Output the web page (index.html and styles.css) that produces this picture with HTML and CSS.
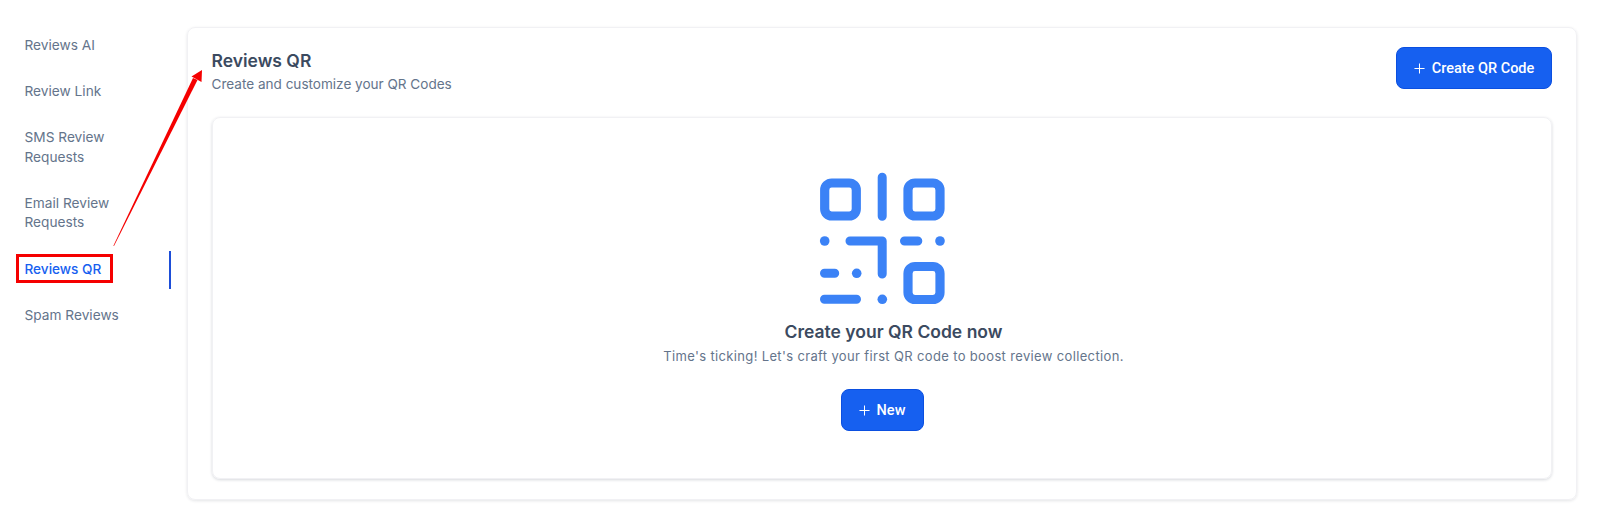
FILE: index.html
```html
<!DOCTYPE html>
<html lang="en">

<head>
    <meta charset="UTF-8">
    <meta name="viewport" content="width=device-width, initial-scale=1.0">
    <title>Reviews QR</title>
    <link rel="stylesheet" href="styles.css">
</head>

<body>
    <nav class="sidebar">
        <a class="nav-item">Reviews AI</a>
        <a class="nav-item">Review Link</a>
        <a class="nav-item">SMS Review Requests</a>
        <a class="nav-item">Email Review Requests</a>
        <a class="nav-item active">Reviews QR</a>
        <a class="nav-item">Spam Reviews</a>
    </nav>

    <main class="panel">
        <header class="panel-head">
            <div class="panel-title">
                <h1>Reviews QR</h1>
                <p>Create and customize your QR Codes</p>
            </div>
            <button class="btn btn-create">
                <svg class="plus" viewBox="0 0 12 12"><path d="M6 .5v11M.5 6h11" /></svg>
                Create QR Code
            </button>
        </header>

        <section class="empty-card">
            <svg class="qr-icon" viewBox="0 0 140 140">
                <rect x="12.7" y="13" width="31.6" height="33" rx="7" />
                <rect x="96" y="13" width="32" height="33" rx="7" />
                <rect x="96" y="96.5" width="32" height="33" rx="7" />
                <path d="M70.2 7.2v39M38 71h32.2v33M92.5 71h13.3M12.5 103.3h10.2M12.5 129.3h32" />
                <circle cx="12.7" cy="71" r="4.8" />
                <circle cx="128" cy="71" r="4.8" />
                <circle cx="44.7" cy="103.3" r="4.8" />
                <circle cx="70.3" cy="129.3" r="4.8" />
            </svg>
            <h2>Create your QR Code now</h2>
            <p>Time's ticking! Let's craft your first QR code to boost review collection.</p>
            <button class="btn btn-new">
                <svg class="plus" viewBox="0 0 12 12"><path d="M6 .5v11M.5 6h11" /></svg>
                New
            </button>
        </section>
    </main>

    <!-- red annotation drawn over the screenshot -->
    <div class="callout-box"></div>
    <svg class="callout-arrow" viewBox="0 0 120 190">
        <polygon points="2,179 1.4,178.7 81,11 85.5,13" />
        <polygon points="90,3 89.5,15 79.5,9.5" />
    </svg>
</body>

</html>
```
FILE: styles.css
```css
* {
    box-sizing: border-box;
}

body {
    margin: 0;
    height: 529px;
    padding: 27px 23px 29px 0;
    display: flex;
    background: #fff;
    color: #334155;
    font-family: Inter, "Noto Sans", sans-serif;
    overflow: hidden;
}

.sidebar {
    width: 171px;
    flex: none;
    display: flex;
    flex-direction: column;
    gap: 8.2px;
}

.nav-item {
    display: block;
    padding: 8.75px 40px 9.75px 24.5px;
    font-size: 13.7px;
    line-height: 19.5px;
    color: #64748b;
}

.nav-item.active {
    color: #1660f0;
    font-size: 13.6px;
    font-weight: 500;
    border-right: 2px solid #1d4ed8;
}

.panel {
    flex: 1;
    margin-left: 16px;
    padding: 19px 24px 20px;
    display: flex;
    flex-direction: column;
    gap: 22px;
    border: 1px solid #f1f1f4;
    border-radius: 8px;
    box-shadow: 0 1px 3px rgba(30, 41, 59, 0.12);
}

.panel-head {
    display: flex;
    justify-content: space-between;
    align-items: flex-start;
}

.panel-title {
    padding-top: 2px;
    margin-left: -0.5px;
}

.panel-head h1 {
    margin: 0;
    font-size: 17.5px;
    line-height: 24px;
    font-weight: 600;
    color: #3b4a60;
}

.panel-head p {
    margin: 0;
    font-size: 13.55px;
    line-height: 22px;
    color: #64748b;
}

.btn {
    display: flex;
    align-items: center;
    justify-content: center;
    gap: 7px;
    height: 42px;
    border: 1px solid #0b4fe0;
    border-radius: 8px;
    background: #1660f0;
    color: #fff;
    font-family: Roboto, sans-serif;
    font-size: 14.5px;
    font-weight: 500;
}

.plus {
    width: 11px;
    height: 11px;
    fill: none;
    stroke: #fff;
    stroke-width: 1.1;
}

.btn-create {
    width: 156px;
}

.btn-new {
    width: 83px;
    margin-top: 23px;
}

.empty-card {
    flex: 1;
    display: flex;
    flex-direction: column;
    align-items: center;
    padding-top: 52px;
    border: 1px solid #f1f1f4;
    border-radius: 8px;
    box-shadow: 0 1px 3px rgba(30, 41, 59, 0.18);
}

.qr-icon {
    width: 140px;
    height: 140px;
    fill: #3b82f6;
}

.qr-icon rect {
    fill: none;
    stroke: #3b82f6;
    stroke-width: 9.2;
}

.qr-icon path {
    fill: none;
    stroke: #3b82f6;
    stroke-width: 9;
    stroke-linecap: round;
    stroke-linejoin: round;
}

.empty-card h2 {
    margin: 10px 0 0 23px;
    font-size: 17.5px;
    line-height: 24px;
    font-weight: 600;
    color: #3b4a60;
}

.empty-card p {
    margin: 2px 0 0 23px;
    font-size: 13px;
    line-height: 20px;
    letter-spacing: 0.35px;
    color: #64748b;
}

/* annotation layer */
.callout-box {
    position: absolute;
    left: 16px;
    top: 254px;
    width: 97px;
    height: 29px;
    border: 3px solid #f50000;
}

.callout-arrow {
    position: absolute;
    left: 112px;
    top: 67px;
    width: 120px;
    height: 190px;
    fill: #f50000;
}
```
